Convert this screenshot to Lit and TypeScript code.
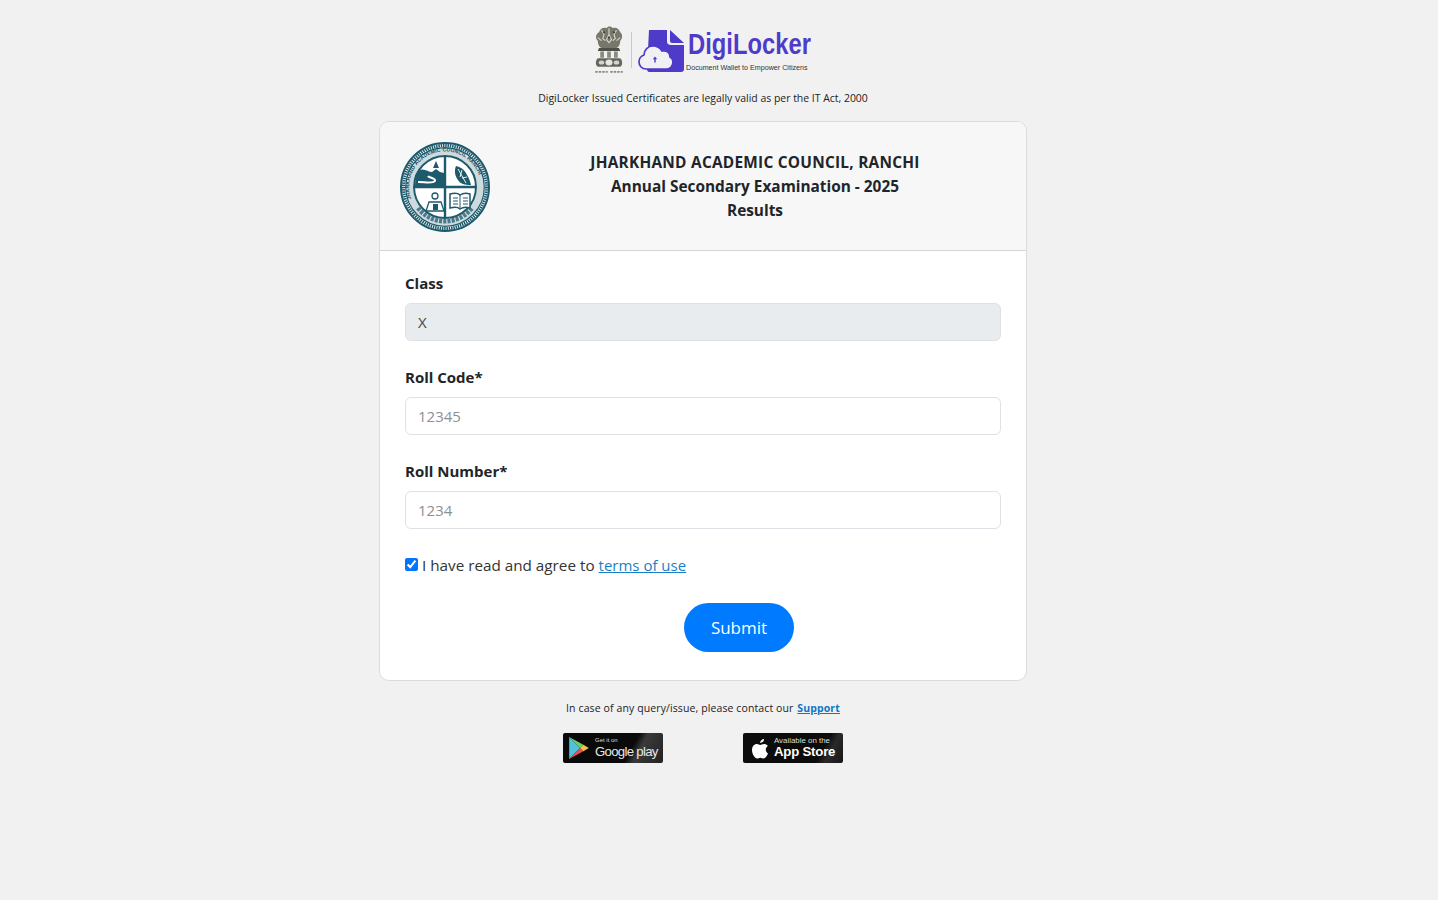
import { LitElement, html, css, svg } from "lit";
import { customElement } from "lit/decorators.js";

const seal = svg`<svg class="seal" viewBox="0 0 90 90" width="90" height="90" role="img" aria-label="Council seal">
  <defs><path id="ring" d="M45 45 m-33.800 12 a35.800 35.800 0 1 1 67.600 0"/></defs>
  <circle cx="45" cy="45" r="44" fill="#fff" stroke="#1d5a6c" stroke-width="2"/>
  <circle cx="45" cy="45" r="41.500" fill="none" stroke="#1d5a6c" stroke-width="3" stroke-dasharray="1.500 .8"/>
  <circle cx="45" cy="45" r="39.300" fill="none" stroke="#1d5a6c" stroke-width="1.200"/>
  <circle cx="45" cy="45" r="35.500" fill="none" stroke="#1d5a6c" stroke-width="7" opacity=".22"/>
  <text font-family="Liberation Sans, sans-serif" font-size="5.200" font-weight="700" fill="#174b5b" textLength="112" lengthAdjust="spacing"><textPath href="#ring">JHARKHAND ACADEMIC COUNCIL RANCHI</textPath></text>
  <path d="M18 66a34 34 0 0 0 54 0" fill="none" stroke="#1d5a6c" stroke-width="4.500" stroke-dasharray="3 1.200" opacity=".75"/>
  <circle cx="45" cy="45" r="31" fill="#fff" stroke="#1d5a6c" stroke-width="2"/>
  <path d="M45 14v62M14 45h62" stroke="#1d5a6c" stroke-width="2.400"/>
  <path d="M15 44c0-6 1-11 4-16 6-2 9 2 13 2l4-3 4 3 4 1v13z" fill="#1d5a6c"/>
  <path d="M18 40c7 0 15 2 17-1 1-3-6-3-7-5" fill="none" stroke="#fff" stroke-width="2"/>
  <path d="M33 26l3-7 3 7z" fill="#1d5a6c"/>
  <path d="M56 24c5 1 9 4 11 9 2 3 3 6 4 10-6 0-11-1-13-5-3-4-4-9-2-14z" fill="#1d5a6c"/>
  <path d="M58 27l8 14M62 28l-2 7M67 35l-5 1" stroke="#fff" stroke-width=".9" fill="none"/>
  <circle cx="35" cy="54" r="3" fill="none" stroke="#1d5a6c" stroke-width="1.300"/>
  <path d="M29 60h12l3 9H26z" fill="none" stroke="#1d5a6c" stroke-width="1.300"/>
  <path d="M33 62h5v6h-5z" fill="#1d5a6c"/>
  <path d="M50 52c4-1 8-1 10 1 3-2 7-2 10-1v14c-3-1-7-1-10 1-2-2-6-2-10-1z" fill="#fff" stroke="#1d5a6c" stroke-width="1.500"/>
  <path d="M60 53v14M53 56h5M53 59h5M53 62h5M63 56h5M63 59h5M63 62h5" stroke="#1d5a6c" stroke-width="1"/>
</svg>`;

const emblem = svg`<svg viewBox="3 0 24 48" width="30" height="50" preserveAspectRatio="none" role="img" aria-label="National emblem">
  <path d="M7 7c1-4 4-5 6-4 1-2 4-2 5 0 3-1 5 1 6 4 2 2 2 6 0 8 0 3-1 6-3 7H9c-2-1-3-4-3-7-2-2-2-6 1-8z" fill="#77776c"/>
  <path d="M9 5l2 4-1 4 2 2M15 3v6l-2 5 2 3 2-3-2-5M21 5l-2 4 1 4-2 2M6 12l3 3M24 12l-3 3" stroke="#d9d9d0" stroke-width=".9" fill="none"/>
  <circle cx="11" cy="7" r=".9" fill="#3f3f38"/><circle cx="19" cy="7" r=".9" fill="#3f3f38"/><circle cx="15" cy="12" r="1" fill="#3f3f38"/>
  <path d="M7 22h16l1 3H6z" fill="#50504a"/>
  <path d="M8 25.500h3v6H8zM13.500 25.500h3v6h-3zM19 25.500h3v6h-3z" fill="#8a8a80"/>
  <path d="M6 32h18c2 2 2 7 0 8H6c-2-1-2-6 0-8z" fill="#66665e"/>
  <circle cx="15" cy="36" r="2.800" fill="#e7e7e2"/>
  <ellipse cx="9" cy="36" rx="2.200" ry="2" fill="#d5d5ce"/>
  <ellipse cx="21" cy="36" rx="2.200" ry="2" fill="#d5d5ce"/>
  <path d="M4 45h10M16 45h10" stroke="#8a8a82" stroke-width="1.500" stroke-dasharray="2 .8"/>
</svg>`;

const docCloud = svg`<svg viewBox="0 0 48 46" width="48" height="46" role="img" aria-label="DigiLocker">
  <path d="M11 3h18v12c0 2 2 3 4 3h13v24c0 2-1 3-3 3H11c-1 0-2-1-2-3z" fill="#4f3bc9"/>
  <path d="M32 3l14 13H34c-1 0-2-1-2-2z" fill="#4f3bc9"/>
  <path d="M8 42c-4 0-7-3-7-7 0-3 2-6 5-7 0-5 4-9 9-9 4 0 7 2 9 5 5-1 8 2 8 6 2 1 3 3 3 5 0 4-3 7-6 7z" fill="#f1f1f4" stroke="#4f3bc9" stroke-width="1.700"/>
  <path d="M17 29.500l-2.200 2.700h1.500v3.300h1.400v-3.300h1.500z" fill="#4f3bc9"/>
</svg>`;

const playIcon = svg`<svg viewBox="0 0 20 22" width="22" height="24" aria-hidden="true">
  <path d="M1 1l10 10L1 21z" fill="#4fc3dc"/>
  <path d="M1 1l13 7-3 3z" fill="#6fce6a"/>
  <path d="M1 21l13-7-3-3z" fill="#e8505b"/>
  <path d="M14 8l5 3-5 3-3-3z" fill="#f6c445"/>
</svg>`;

const appleIcon = svg`<svg viewBox="0 0 18 21" width="18" height="21" aria-hidden="true">
  <path d="M13 1c.1 2-1.700 4-3.800 3.900C9 3 11 1 13 1z" fill="#fff"/>
  <path d="M17 15.500c-.9 2.300-2.600 5-4.300 5-1.200 0-1.800-.8-3.300-.8s-2.100.8-3.300.8C3.800 20.500 1 16 1 12c0-3.700 2.300-6 4.800-6 1.400 0 2.700.9 3.500.9.800 0 2.200-1 3.800-1 1 0 2.800.4 3.800 2-3 1.800-2.700 6 .1 7.600z" fill="#fff"/>
</svg>`;

@customElement("app-root")
export class AppRoot extends LitElement {
  static styles = css`
    :host {
      display: block;
      min-height: 900px;
      background: #f1f1f1;
      font-family: "Open Sans", "Noto Sans", sans-serif;
      color: #212529;
    }
    .page {
      width: 1406px;
      display: flex;
      flex-direction: column;
      align-items: center;
    }
    .logo {
      display: flex;
      align-items: center;
      height: 50px;
      margin-top: 25px;
    }
    .rule {
      width: 1px;
      height: 36px;
      background: #c9c9c9;
      margin: 0 6px 0 7px;
    }
    .brand {
      display: flex;
      flex-direction: column;
      width: 126px;
      margin-top: 0;
    }
    .brand-name {
      font-family: "Liberation Sans", sans-serif;
      font-size: 29px;
      line-height: 32px;
      font-weight: 700;
      color: #4f3bc9;
      transform: scaleX(0.82);
      transform-origin: left center;
      margin-left: 2px;
      white-space: nowrap;
    }
    .brand-sub {
      font-family: "Liberation Sans", sans-serif;
      font-size: 7.150px;
      line-height: 10px;
      margin-top: 3px;
      color: #333;
      white-space: nowrap;
    }
    .caption {
      margin: 14px 0 0;
      font-size: 10.450px;
      line-height: 18px;
      color: #222;
    }
    .card {
      box-sizing: border-box;
      width: 648px;
      height: 560px;
      margin-top: 14px;
      background: #fff;
      border: 1px solid #dcdcdc;
      border-radius: 10px;
      overflow: hidden;
    }
    .card-head {
      display: grid;
      grid-template-columns: 90px 1fr;
      gap: 14px;
      align-items: center;
      height: 129px;
      box-sizing: border-box;
      padding: 2px 20px 0;
      background: #f7f7f7;
      border-bottom: 1px solid #d5d5d5;
    }
    .seal { display: block; }
    .titles {
      text-align: center;
      font-size: 15.400px;
      line-height: 24px;
      font-weight: 700;
      color: #212529;
    }
    .titles .caps { letter-spacing: 0.25px; }
    .form {
      padding: 20px 25px 0;
    }
    .group { margin-bottom: 24px; }
    label.field-label {
      display: block;
      font-size: 15px;
      line-height: 24px;
      font-weight: 700;
      margin-bottom: 8px;
    }
    input.text {
      display: block;
      box-sizing: border-box;
      width: 100%;
      height: 38px;
      padding: 6px 12px;
      font: inherit;
      font-size: 15px;
      color: #444;
      background: #fff;
      border: 1px solid #dee2e6;
      border-radius: 6px;
      outline: none;
    }
    input.text::placeholder { color: #8f8f8f; opacity: 1; }
    input.text[readonly] { background: #e9ecef; }
    .agree {
      display: flex;
      align-items: center;
      height: 24px;
      font-size: 15px;
      line-height: 24px;
      color: #333;
    }
    .agree input {
      width: 13px;
      height: 13px;
      margin: 0 4px 0 0;
      accent-color: #0075ff;
      position: relative;
      top: -1px;
    }
    .agree span { font-size: 15.250px; }
    .agree a { color: #1a7fc4; margin-left: 4px; }
    .actions {
      display: flex;
      justify-content: center;
      margin-top: 26px;
      padding-left: 72px;
    }
    button {
      width: 110px;
      height: 49px;
      border: 0;
      border-radius: 25px;
      background: #007bff;
      color: #fff;
      font: inherit;
      font-size: 17px;
      cursor: pointer;
    }
    .help {
      margin: 18px 0 0;
      font-size: 10.500px;
      letter-spacing: 0.11px;
      line-height: 18px;
      color: #222;
    }
    .help a { color: #0f76c4; font-weight: 700; margin-left: 1px; }
    .stores {
      display: flex;
      gap: 80px;
      margin-top: 16px;
    }
    .store {
      width: 100px;
      height: 30px;
      box-sizing: border-box;
      display: flex;
      align-items: center;
      border-radius: 2px;
      color: #fff;
      font-family: "Liberation Sans", sans-serif;
      overflow: hidden;
    }
    .store.play {
      padding-left: 5px;
      gap: 5px;
      background: linear-gradient(118deg, #0a0a0a 0 66%, #3a3a3a 74%, #222 100%);
    }
    .store.apple {
      padding-left: 8px;
      gap: 5px;
      background: linear-gradient(118deg, #0c0c0c 0 76%, #2a2a2a 84%, #161616 100%);
    }
    .store-text { display: flex; flex-direction: column; }
    .small {
      font-size: 7.900px;
      line-height: 7px;
      white-space: nowrap;
      color: #ddd;
    }
    .big {
      line-height: 15px;
      white-space: nowrap;
    }
    .play .small { font-size: 6px; }
    .play .big { font-size: 13.200px; letter-spacing: -0.7px; color: #e8e8e8; }
    .apple .big { font-size: 13.200px; font-weight: 700; letter-spacing: -0.2px; }
  `;

  render() {
    return html`
      <div class="page">
        <div class="logo">
          ${emblem}
          <span class="rule"></span>
          ${docCloud}
          <div class="brand">
            <span class="brand-name">DigiLocker</span>
            <span class="brand-sub">Document Wallet to Empower Citizens</span>
          </div>
        </div>
        <p class="caption">DigiLocker Issued Certificates are legally valid as per the IT Act, 2000</p>
        <div class="card">
          <div class="card-head">
            ${seal}
            <div class="titles">
              <div class="caps">JHARKHAND ACADEMIC COUNCIL, RANCHI</div>
              <div>Annual Secondary Examination - 2025</div>
              <div>Results</div>
            </div>
          </div>
          <div class="form">
            <div class="group">
              <label class="field-label">Class</label>
              <input class="text" readonly value="X" />
            </div>
            <div class="group">
              <label class="field-label">Roll Code*</label>
              <input class="text" placeholder="12345" />
            </div>
            <div class="group">
              <label class="field-label">Roll Number*</label>
              <input class="text" placeholder="1234" />
            </div>
            <div class="agree">
              <input type="checkbox" checked />
              <span>I have read and agree to</span>
              <a href="#">terms of use</a>
            </div>
            <div class="actions"><button type="button">Submit</button></div>
          </div>
        </div>
        <p class="help">In case of any query/issue, please contact our <a href="#">Support</a></p>
        <div class="stores">
          <div class="store play">
            ${playIcon}
            <div class="store-text"><span class="small">Get it on</span><span class="big">Google play</span></div>
          </div>
          <div class="store apple">
            ${appleIcon}
            <div class="store-text"><span class="small">Available on the</span><span class="big">App Store</span></div>
          </div>
        </div>
      </div>
    `;
  }
}
